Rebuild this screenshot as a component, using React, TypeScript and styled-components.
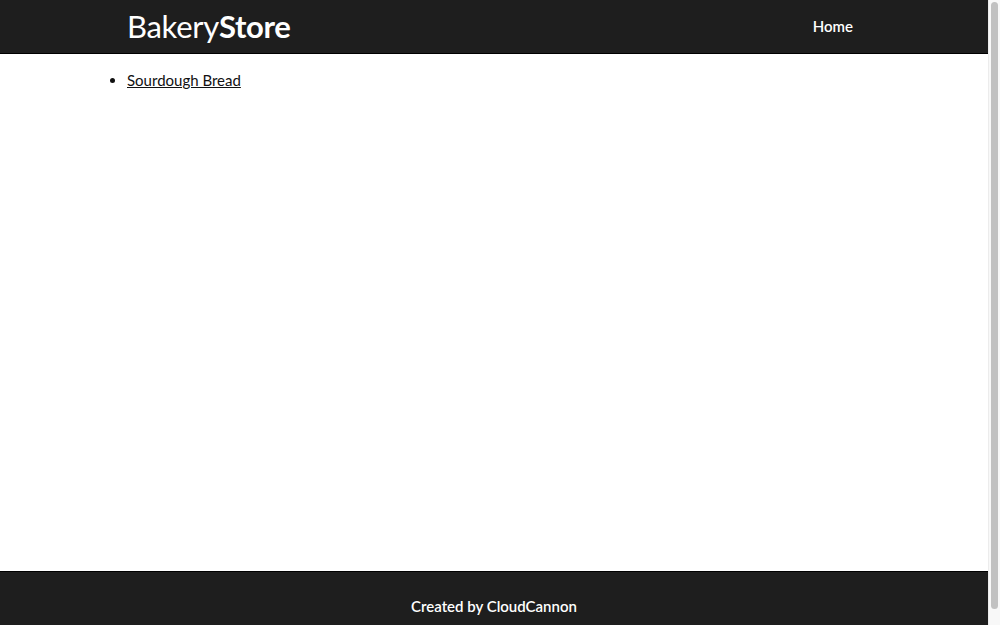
import React from 'react';
import styled, { createGlobalStyle } from 'styled-components';

const GlobalStyle = createGlobalStyle`
  html, body {
    margin: 0;
    padding: 0;
  }

  body {
    font-family: Lato, "Noto Sans", sans-serif;
    font-size: 15px;
    color: #111;
    background: #fff;
    padding-right: 12px;
  }
`;

const products = [{ title: 'Sourdough Bread', url: '#' }];

export default function App() {
    return (
        <>
            <GlobalStyle />
            <Page>
                <Header>
                    <Container>
                        <Logo href="#">Bakery<strong>Store</strong></Logo>
                        <Nav>
                            <NavLink href="#">Home</NavLink>
                        </Nav>
                    </Container>
                </Header>
                <Main>
                    <Container>
                        <ProductList>
                            {products.map((p) => (
                                <li key={p.title}>
                                    <ProductLink href={p.url}>{p.title}</ProductLink>
                                </li>
                            ))}
                        </ProductList>
                    </Container>
                </Main>
                <Footer>
                    <FooterText>Created by CloudCannon</FooterText>
                </Footer>
            </Page>
            <ScrollTrack>
                <ScrollThumb />
            </ScrollTrack>
        </>
    );
}

const Page = styled.div`
  display: flex;
  flex-direction: column;
  min-height: 645px;
`

const Container = styled.div`
  max-width: 734px;
  margin: 0 auto;
  width: 100%;
  display: flex;
  align-items: center;
  justify-content: space-between;
`

const Header = styled.header`
  background-color: #1e1e1e;
  border-bottom: 1px solid #000;
  height: 54px;
  display: flex;
  align-items: center;
  padding-bottom: 2px;
  box-sizing: border-box;
`

const Logo = styled.a`
  color: #fff;
  text-decoration: none;
  font-size: 31px;
  font-weight: 400;
  letter-spacing: -0.3px;

  strong {
    font-weight: 700;
  }
`

const Nav = styled.nav`
  display: flex;
  gap: 16px;
`

const NavLink = styled.a`
  color: #fff;
  text-decoration: none;
  font-size: 15px;
  font-weight: 600;
  padding: 0 8px;
`

const Main = styled.main`
  flex: 1;
`

const ProductList = styled.ul`
  margin: 14px 0 0;
  padding: 0;
  line-height: 24px;
`

const ProductLink = styled.a`
  color: #111;
`

const Footer = styled.footer`
  background-color: #1e1e1e;
  border-top: 1px solid #000;
  height: 74px;
  display: flex;
  align-items: center;
  justify-content: center;
  padding-bottom: 6px;
  box-sizing: border-box;
`

const FooterText = styled.p`
  margin: 0;
  color: #fff;
  font-size: 15px;
  font-weight: 600;
`

const ScrollTrack = styled.div`
  position: fixed;
  top: 0;
  right: 0;
  bottom: 0;
  width: 12px;
  background: #f8f8f8;
  border-left: 1px solid #ececec;
  box-sizing: border-box;
  padding: 2px 2px 16px 2px;
`

const ScrollThumb = styled.div`
  height: 100%;
  background: #c1c1c1;
  border-radius: 4px;
`
